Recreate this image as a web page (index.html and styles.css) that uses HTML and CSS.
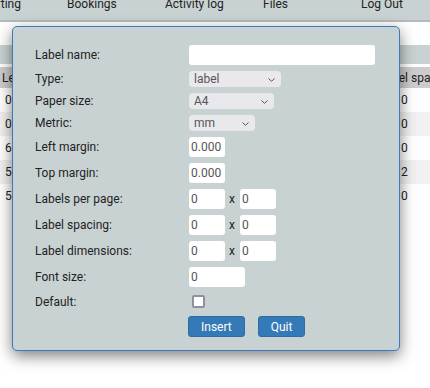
FILE: index.html
```html
<!DOCTYPE html>
<html lang="en">
<head>
    <meta charset="UTF-8">
    <meta name="viewport" content="width=device-width, initial-scale=1.0">
    <title>Labels</title>
    <link rel="stylesheet" href="styles.css">
</head>
<body>
    <div class="topnav">
        <a href="#">Reporting</a>
        <a href="#">Bookings</a>
        <a href="#">Activity log</a>
        <a href="#">Files</a>
        <a href="#">Log Out</a>
    </div>
    <div class="caption"></div>
    <table class="grid">
        <colgroup>
            <col style="width:40px">
            <col style="width:335px">
            <col style="width:120px">
        </colgroup>
        <thead>
            <tr><th>Left margin</th><th>Label name</th><th class="last">Label spacing</th></tr>
        </thead>
        <tbody>
            <tr><td>0</td><td>Default</td><td class="last">0</td></tr>
            <tr><td>0</td><td>Address</td><td class="last">0</td></tr>
            <tr><td>6</td><td>Avery</td><td class="last">0</td></tr>
            <tr><td>5</td><td>Shipping</td><td class="last">2</td></tr>
            <tr><td>5</td><td>Small</td><td class="last">0</td></tr>
        </tbody>
    </table>

    <div class="modal">
        <form class="label-form">
            <label for="lbl-name">Label name:</label>
            <div class="field"><input type="text" id="lbl-name" class="txt wide"></div>

            <label for="lbl-type">Type:</label>
            <div class="field">
                <span class="sel">
                    <select id="lbl-type" class="type"><option>label</option></select>
                    <svg class="chev" width="7" height="4" viewBox="0 0 7 4"><path d="M0.5 0.5 L3.5 3.3 L6.5 0.5" fill="none" stroke="#555" stroke-width="1"/></svg>
                </span>
            </div>

            <label for="lbl-paper">Paper size:</label>
            <div class="field">
                <span class="sel">
                    <select id="lbl-paper" class="paper"><option>A4</option></select>
                    <svg class="chev" width="7" height="4" viewBox="0 0 7 4"><path d="M0.5 0.5 L3.5 3.3 L6.5 0.5" fill="none" stroke="#555" stroke-width="1"/></svg>
                </span>
            </div>

            <label for="lbl-metric">Metric:</label>
            <div class="field">
                <span class="sel">
                    <select id="lbl-metric" class="metric"><option>mm</option></select>
                    <svg class="chev" width="7" height="4" viewBox="0 0 7 4"><path d="M0.5 0.5 L3.5 3.3 L6.5 0.5" fill="none" stroke="#555" stroke-width="1"/></svg>
                </span>
            </div>

            <label for="lbl-left">Left margin:</label>
            <div class="field"><input type="text" id="lbl-left" class="txt small" value="0.000"></div>

            <label for="lbl-top">Top margin:</label>
            <div class="field"><input type="text" id="lbl-top" class="txt small" value="0.000"></div>

            <label for="lbl-cols">Labels per page:</label>
            <div class="field">
                <input type="text" id="lbl-cols" class="txt small" value="0">
                <span class="times">x</span>
                <input type="text" class="txt small" value="0">
            </div>

            <label for="lbl-sp">Label spacing:</label>
            <div class="field">
                <input type="text" id="lbl-sp" class="txt small" value="0">
                <span class="times">x</span>
                <input type="text" class="txt small" value="0">
            </div>

            <label for="lbl-dim">Label dimensions:</label>
            <div class="field">
                <input type="text" id="lbl-dim" class="txt small" value="0">
                <span class="times">x</span>
                <input type="text" class="txt small" value="0">
            </div>

            <label for="lbl-font">Font size:</label>
            <div class="field"><input type="text" id="lbl-font" class="txt medium" value="0"></div>

            <label for="lbl-def">Default:</label>
            <div class="field"><input type="checkbox" id="lbl-def" class="check"></div>

            <div class="buttons">
                <button type="button" class="btn">Insert</button>
                <button type="button" class="btn">Quit</button>
            </div>
        </form>
    </div>
</body>
</html>
```

FILE: styles.css
```css
body {
    margin: 0;
    height: 388px;
    overflow: hidden;
    background-color: #fff;
    font-family: Roboto, "Liberation Sans", sans-serif;
    font-size: 12px;
    color: #222;
}
.topnav {
    display: flex;
    height: 20px;
    margin-left: -31px;
    overflow: hidden;
    background-color: #c9d2d3;
    border-bottom: 2px solid #b3bbbc;
}
.topnav a {
    flex: none;
    width: 98px;
    margin-top: -2px;
    line-height: 12px;
    color: #222;
    text-decoration: none;
}
.caption {
    height: 19px;
    margin-top: 23px;
    background-color: #c9d2d3;
}
.grid {
    margin-top: 3px;
    border-collapse: collapse;
    table-layout: fixed;
    width: 495px;
    white-space: nowrap;
}
.grid th {
    height: 21px;
    padding: 0 2px;
    background-color: #cdcdcd;
    font-weight: normal;
    text-align: left;
    overflow: hidden;
}
.grid th.last {
    padding-left: 4px;
}
.grid td {
    height: 24px;
    padding: 0 5px;
    overflow: hidden;
}
.grid td.last {
    padding-left: 26px;
}
.grid tbody tr:nth-child(even) {
    background-color: #f1f1f1;
}
.modal {
    position: absolute;
    left: 12px;
    top: 26px;
    width: 388px;
    box-sizing: border-box;
    padding: 18px 22px 13px;
    background-color: #c9d2d3;
    border: 1px solid #3a7bbd;
    border-radius: 5px;
    box-shadow: 0 5px 15px rgba(0, 0, 0, 0.5);
}
.label-form {
    display: grid;
    grid-template-columns: 154px 1fr;
    row-gap: 6px;
    align-items: center;
}
.label-form label {
    color: #222;
}
.field {
    display: flex;
    align-items: center;
}
.txt {
    height: 20px;
    box-sizing: border-box;
    margin: 0;
    padding: 0 2px;
    border: none;
    border-radius: 3px;
    background-color: #fff;
    font-family: Roboto, "Liberation Sans", sans-serif;
    font-size: 12px;
    color: #555;
    outline: none;
}
.txt.wide {
    width: 186px;
}
.txt.small {
    width: 36px;
}
.txt.medium {
    width: 56px;
}
.times {
    margin: 0 5px 0 4px;
    color: #222;
}
.sel {
    position: relative;
    display: inline-flex;
}
.sel select {
    appearance: none;
    -webkit-appearance: none;
    height: 16px;
    margin: 0;
    padding: 0 5px;
    border: none;
    border-radius: 4px;
    background-color: #e9e9ed;
    font-family: Roboto, "Liberation Sans", sans-serif;
    font-size: 12px;
    color: #555;
}
.sel select.type {
    width: 92px;
}
.sel select.paper {
    width: 85px;
}
.sel select.metric {
    width: 66px;
}
.chev {
    position: absolute;
    right: 6px;
    top: 7px;
    pointer-events: none;
}
.check {
    appearance: none;
    -webkit-appearance: none;
    width: 13px;
    height: 13px;
    margin: 2px 0 2px 3px;
    box-sizing: border-box;
    border: 2px solid #8f8f9d;
    border-radius: 2px;
    background-color: #fff;
}
.buttons {
    grid-column: 2;
    display: flex;
    gap: 13px;
    margin-left: -1px;
}
.btn {
    height: 21px;
    padding: 0 12px;
    background-color: #337ab7;
    color: #fff;
    border: 1px solid #2e6da4;
    border-radius: 3px;
    font-family: Roboto, "Liberation Sans", sans-serif;
    font-size: 12px;
}
```
